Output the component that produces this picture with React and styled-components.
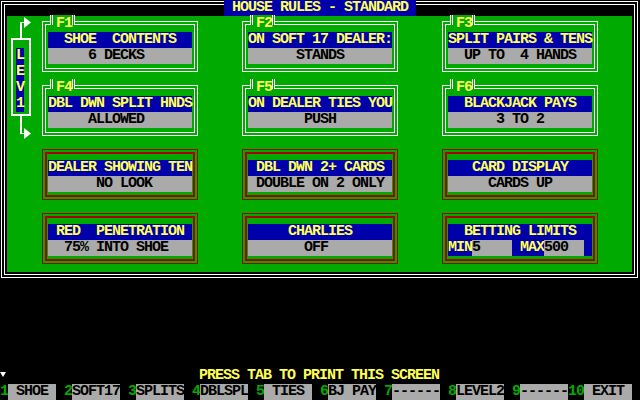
import React from 'react';
import styled, { createGlobalStyle } from 'styled-components';

const GlobalStyle = createGlobalStyle`
  * { box-sizing: border-box; }
  html, body { margin: 0; padding: 0; background: #000000; }
`;

const Screen = styled.div`
  width: 640px;
  height: 400px;
  background: #000000;
  display: flex;
  flex-direction: column;
  overflow: hidden;
  font-family: "Liberation Mono", "DejaVu Sans Mono", monospace;
  font-weight: 700;
  font-size: 15px;
  letter-spacing: -1px;
  line-height: 16px;
`;

const Frame = styled.div`
  position: relative;
  margin: 1px 0 0 1px;
  width: 637px;
  border: 1px solid #ffffff;
  padding: 2px;
`;

const InnerFrame = styled.div`
  border: 1px solid #ffffff;
  padding: 11px 2px 2px 2px;
`;

const Title = styled.div`
  position: absolute;
  top: -2px;
  left: 222px;
  width: 192px;
  height: 16px;
  background: #0000aa;
  color: #ffff55;
  white-space: pre;
`;

const Felt = styled.div`
  background: #00aa00;
  height: 256px;
  display: flex;
  align-items: flex-start;
  padding: 1px 0 0 4px;
`;

const LevelRail = styled.div`
  width: 20px;
  display: flex;
  flex-direction: column;
`;

const LevelBox = styled.div`
  height: 78px;
  border: 2px solid #ffffff;
  padding: 8px 0 0 3px;
`;

const LevelText = styled.div`
  width: 8px;
  background: #0000aa;
  color: #ffff55;
  text-align: center;
  letter-spacing: 0;
  span { display: block; height: 16px; }
`;

const RuleGrid = styled.div`
  margin: 4px 0 0 11px;
  display: grid;
  grid-template-columns: repeat(3, 156px);
  column-gap: 44px;
  row-gap: 13px;
`;

const RuleBox = styled.div`
  position: relative;
  border: 1px solid ${(p) => p.$tone};
  padding: 2px;
`;

const RuleInner = styled.div`
  border: ${(p) => p.$weight}px solid ${(p) => p.$tone};
  padding: ${(p) => (p.$weight === 2 ? '6px 1px 3px' : '7px 2px 4px')};
`;

const Header = styled.div`
  height: 16px;
  background: #0000aa;
  color: #ffff55;
  white-space: pre;
`;

const Value = styled.div`
  height: 16px;
  background: #aaaaaa;
  color: #000000;
  white-space: pre;
`;

const LimitRow = styled.div`
  height: 16px;
  display: flex;
  background: #0000aa;
  color: #ffff55;
  white-space: pre;
`;

const LimitField = styled.span`
  width: 40px;
  background: #aaaaaa;
  color: #000000;
`;

const KeyTab = styled.div`
  position: absolute;
  top: -7px;
  left: 7px;
  height: 10px;
  padding: 1px 0 0 3px;
  background: #00aa00;
  border-left: 3px double #ffffff;
  border-right: 3px double #ffffff;
  color: #ffff55;
  white-space: pre;
`;

const Spacer = styled.div`
  flex: 1;
`;

const PromptRow = styled.div`
  height: 16px;
  display: flex;
  align-items: flex-start;
`;

const Marker = styled.span`
  width: 0;
  height: 0;
  margin: 4px 1px 0 0;
  border-left: 3.5px solid transparent;
  border-right: 3.5px solid transparent;
  border-top: 5px solid #ffffff;
`;

const Prompt = styled.span`
  margin-left: 192px;
  color: #ffff55;
  white-space: pre;
`;

const KeyRow = styled.div`
  height: 16px;
  display: flex;
  white-space: pre;
`;

const KeyNum = styled.span`
  color: #00aa00;
`;

const KeyLabel = styled.span`
  width: 48px;
  background: #aaaaaa;
  color: #000000;
`;

const KeyGap = styled.span`
  width: 8px;
`;

const WHITE = '#ffffff';
const RED = '#aa0000';

const rules = [
  { key: 'F1', head: '  SHOE  CONTENTS  ', val: '     6 DECKS      ' },
  { key: 'F2', head: 'ON SOFT 17 DEALER:', val: '      STANDS      ' },
  { key: 'F3', head: 'SPLIT PAIRS & TENS', val: '  UP TO  4 HANDS  ' },
  { key: 'F4', head: 'DBL DWN SPLIT HNDS', val: '     ALLOWED      ' },
  { key: 'F5', head: 'ON DEALER TIES YOU', val: '       PUSH       ' },
  { key: 'F6', head: '  BLACKJACK PAYS  ', val: '      3 TO 2      ' },
  { head: 'DEALER SHOWING TEN', val: '      NO LOOK     ' },
  { head: ' DBL DWN 2+ CARDS ', val: ' DOUBLE ON 2 ONLY ' },
  { head: '   CARD DISPLAY   ', val: '     CARDS UP     ' },
  { head: ' RED  PENETRATION ', val: '  75% INTO SHOE   ' },
  { head: '     CHARLIES     ', val: '       OFF        ' },
  { head: '  BETTING LIMITS  ', limits: true },
];

const keys = [
  ['1', ' SHOE '],
  ['2', 'SOFT17'],
  ['3', 'SPLITS'],
  ['4', 'DBLSPL'],
  ['5', ' TIES '],
  ['6', 'BJ PAY'],
  ['7', '------'],
  ['8', 'LEVEL2'],
  ['9', '------', true],
  ['10', ' EXIT '],
];

const ArrowUp = () => (
  <svg width="20" height="21" viewBox="0 0 20 21">
    <rect x="9" y="5" width="2" height="16" fill="#fff" />
    <rect x="9" y="5" width="5" height="1" fill="#fff" />
    <polygon points="13,0 20,5.5 13,11" fill="#fff" />
  </svg>
);

const ArrowDown = () => (
  <svg width="20" height="23" viewBox="0 0 20 23">
    <rect x="9" y="0" width="2" height="18" fill="#fff" />
    <rect x="9" y="17" width="5" height="1" fill="#fff" />
    <polygon points="13,12 20,17.5 13,23" fill="#fff" />
  </svg>
);

const Rule = ({ rule }) => {
  const tone = rule.key ? WHITE : RED;
  return (
    <RuleBox $tone={tone}>
      {rule.key && <KeyTab>{rule.key}</KeyTab>}
      <RuleInner $tone={tone} $weight={rule.key ? 1 : 2}>
        <Header>{rule.head}</Header>
        {rule.limits ? (
          <LimitRow>
            <span>MIN</span>
            <LimitField>5    </LimitField>
            <span> MAX</span>
            <LimitField>500  </LimitField>
          </LimitRow>
        ) : (
          <Value>{rule.val}</Value>
        )}
      </RuleInner>
    </RuleBox>
  );
};

const App = () => (
  <Screen>
    <GlobalStyle />
    <Frame>
      <Title> HOUSE RULES - STANDARD </Title>
      <InnerFrame>
        <Felt>
          <LevelRail>
            <ArrowUp />
            <LevelBox>
              <LevelText>
                <span>L</span>
                <span>E</span>
                <span>V</span>
                <span>1</span>
              </LevelText>
            </LevelBox>
            <ArrowDown />
          </LevelRail>
          <RuleGrid>
            {rules.map((r) => (
              <Rule key={r.head} rule={r} />
            ))}
          </RuleGrid>
        </Felt>
      </InnerFrame>
    </Frame>
    <Spacer />
    <PromptRow>
      <Marker />
      <Prompt>PRESS TAB TO PRINT THIS SCREEN</Prompt>
    </PromptRow>
    <KeyRow>
      {keys.map(([n, label, tight], i) => (
        <React.Fragment key={n}>
          <KeyNum>{n}</KeyNum>
          <KeyLabel>{label}</KeyLabel>
          {!tight && <KeyGap />}
        </React.Fragment>
      ))}
    </KeyRow>
  </Screen>
);

export default App;
